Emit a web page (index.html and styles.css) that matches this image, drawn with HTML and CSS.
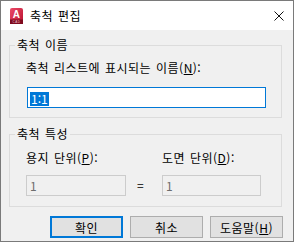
FILE: index.html
```html
<!DOCTYPE html>
<html lang="ko">
<head>
    <meta charset="UTF-8">
    <title>축척 편집</title>
    <link rel="stylesheet" href="styles.css">
</head>
<body>
    <div class="dialog">
        <!-- Title bar -->
        <div class="titlebar">
            <svg class="app-icon" width="13" height="16" viewBox="0 0 13 16">
                <defs>
                    <linearGradient id="red" x1="0" y1="0" x2="1" y2="1">
                        <stop offset="0" stop-color="#ec4a68"/>
                        <stop offset="1" stop-color="#b8102e"/>
                    </linearGradient>
                </defs>
                <rect x="0" y="0" width="13" height="16" rx="2" fill="url(#red)"/>
                <rect x="0" y="11.5" width="13" height="4.5" fill="#7e0a1f"/>
                <text x="6.5" y="10" text-anchor="middle" font-family="Liberation Sans, sans-serif" font-weight="bold" font-size="10" fill="#fff">A</text>
                <text x="6.5" y="15" text-anchor="middle" font-family="Liberation Sans, sans-serif" font-size="3" fill="#f3c7d0">CAD</text>
            </svg>
            <span class="title">축척 편집</span>
            <svg class="close" width="10" height="10" viewBox="0 0 10 10">
                <path d="M0.5 0.5 L9.5 9.5 M9.5 0.5 L0.5 9.5" stroke="#111" stroke-width="1" fill="none"/>
            </svg>
        </div>

        <div class="content">
            <fieldset class="group">
                <legend>축척 이름</legend>
                <div class="group-body">
                    <div class="label">축척 리스트에 표시되는 이름(<u>N</u>):</div>
                    <div class="edit focused"><span class="sel">1:1</span></div>
                </div>
            </fieldset>

            <fieldset class="group group-props">
                <legend>축척 특성</legend>
                <div class="group-body units">
                    <div class="label">용지 단위(<u>P</u>):</div>
                    <div></div>
                    <div class="label">도면 단위(<u>D</u>):</div>
                    <div class="edit disabled">1</div>
                    <div class="eq">=</div>
                    <div class="edit disabled">1</div>
                </div>
            </fieldset>

            <div class="buttons">
                <button class="btn default">확인</button>
                <button class="btn">취소</button>
                <button class="btn">도움말(<u>H</u>)</button>
            </div>
        </div>
    </div>
</body>
</html>
```

FILE: styles.css
```css
* {
    box-sizing: border-box;
}

body {
    margin: 0;
    background-color: #f0f0f0;
}

/* Dialog window */
.dialog {
    width: 294px;
    height: 242px;
    border: 1px solid #7a7a7a;
    background-color: #f0f0f0;
    font-family: "Noto Sans CJK KR", "Noto Sans", sans-serif;
    font-size: 12px;
    letter-spacing: 0.5px;
    word-spacing: 1px;
    color: #000;
}

/* Title bar */
.titlebar {
    height: 29px;
    background-color: #fff;
    display: flex;
    align-items: center;
    padding: 0 9px;
}

.app-icon {
    margin-right: 7px;
    flex-shrink: 0;
}

.title {
    flex: 1;
    line-height: 14px;
}

.close {
    flex-shrink: 0;
}

/* Main content */
.content {
    padding: 8px 10px 0 8px;
}

.group {
    margin: 0;
    padding: 0;
    width: 273px;
    min-width: 0;
    border: 1px solid #dcdcdc;
}

.group legend {
    margin-left: 5px;
    padding: 0 2px;
    line-height: 14px;
}

.group-props {
    margin-top: 9px;
}

.group-body {
    padding: 8px 0 9px 16px;
}

.label {
    line-height: 15px;
    height: 15px;
    white-space: nowrap;
}

.edit {
    height: 21px;
}

.edit.focused {
    width: 239px;
    margin: 12px 0 0 1px;
    border: 1px solid #0078d7;
    background-color: #fff;
    padding: 2px 2px;
}

.sel {
    display: inline-block;
    background-color: #0078d7;
    color: #fff;
    line-height: 14px;
    letter-spacing: 0;
    padding: 0 1px;
}

/* Units row */
.units {
    display: grid;
    grid-template-columns: 100px 36px 99px;
    row-gap: 10px;
    padding: 9px 0 10px 16px;
}

.edit.disabled {
    border: 1px solid #cccccc;
    background-color: #f0f0f0;
    color: #6d6d6d;
    padding-left: 3px;
    line-height: 19px;
}

.eq {
    padding-left: 11px;
    line-height: 19px;
}

/* Buttons */
.buttons {
    display: flex;
    justify-content: flex-end;
    gap: 7px;
    margin-top: 9px;
}

.btn {
    width: 73px;
    height: 22px;
    padding: 0;
    background-color: #e1e1e1;
    border: 1px solid #adadad;
    font-family: inherit;
    font-size: 12px;
    letter-spacing: inherit;
    word-spacing: inherit;
    color: #000;
}

.btn.default {
    border: 2px solid #0078d7;
}
```
